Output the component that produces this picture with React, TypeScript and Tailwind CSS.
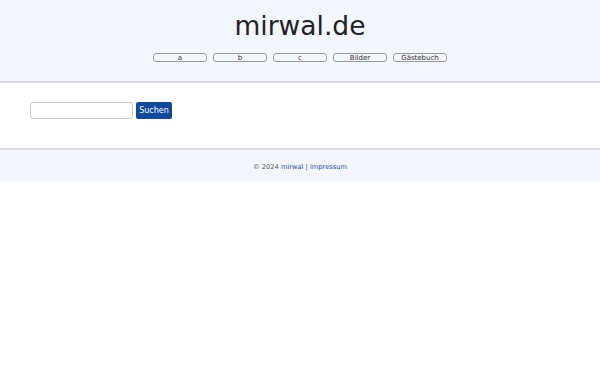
import React from "react";

export default function App() {
  const navs = ["a", "b", "c", "Bilder", "Gästebuch"];
  return (
    <div className="w-[600px] min-h-[375px] bg-white" style={{ fontFamily: '"DejaVu Sans", sans-serif' }}>
      <header className="bg-[#f3f6fd] border-b-2 border-[#d4d6de] h-[83px] flex flex-col items-center">
        <h1 className="text-[26.5px] leading-none text-[#222222] mt-[13px]">mirwal.de</h1>
        <nav className="flex gap-[6px] mt-[13px]">
          {navs.map((n) => (
            <button
              key={n}
              className="w-[54px] h-[9px] rounded-[3px] border border-[#9a9aa2] bg-[#f4f5f8] text-[7px] leading-none text-[#333] flex items-center justify-center pt-[2px]"
            >
              {n}
            </button>
          ))}
        </nav>
      </header>
      <main className="h-[67px] flex items-start pt-[19px] pl-[30px] gap-[3px] border-b-2 border-[#dcdde3]">
        <input className="w-[103px] h-[17px] border border-[#c8c8d0] rounded-[3px] bg-white" />
        <button className="h-[17px] w-[36px] bg-[#0f4a9e] text-white text-[8px] rounded-[2px] leading-none flex items-center justify-center pt-[1px]">
          Suchen
        </button>
      </main>
      <footer className="bg-[#f3f6fd] h-[32px] flex items-center justify-center text-[6.7px] text-[#555] pt-[2px]">
        <span>
          © 2024 <span className="text-[#1f4fa8]">mirwal</span> | <span className="text-[#1f4fa8]">impressum</span>
        </span>
      </footer>
    </div>
  );
}
